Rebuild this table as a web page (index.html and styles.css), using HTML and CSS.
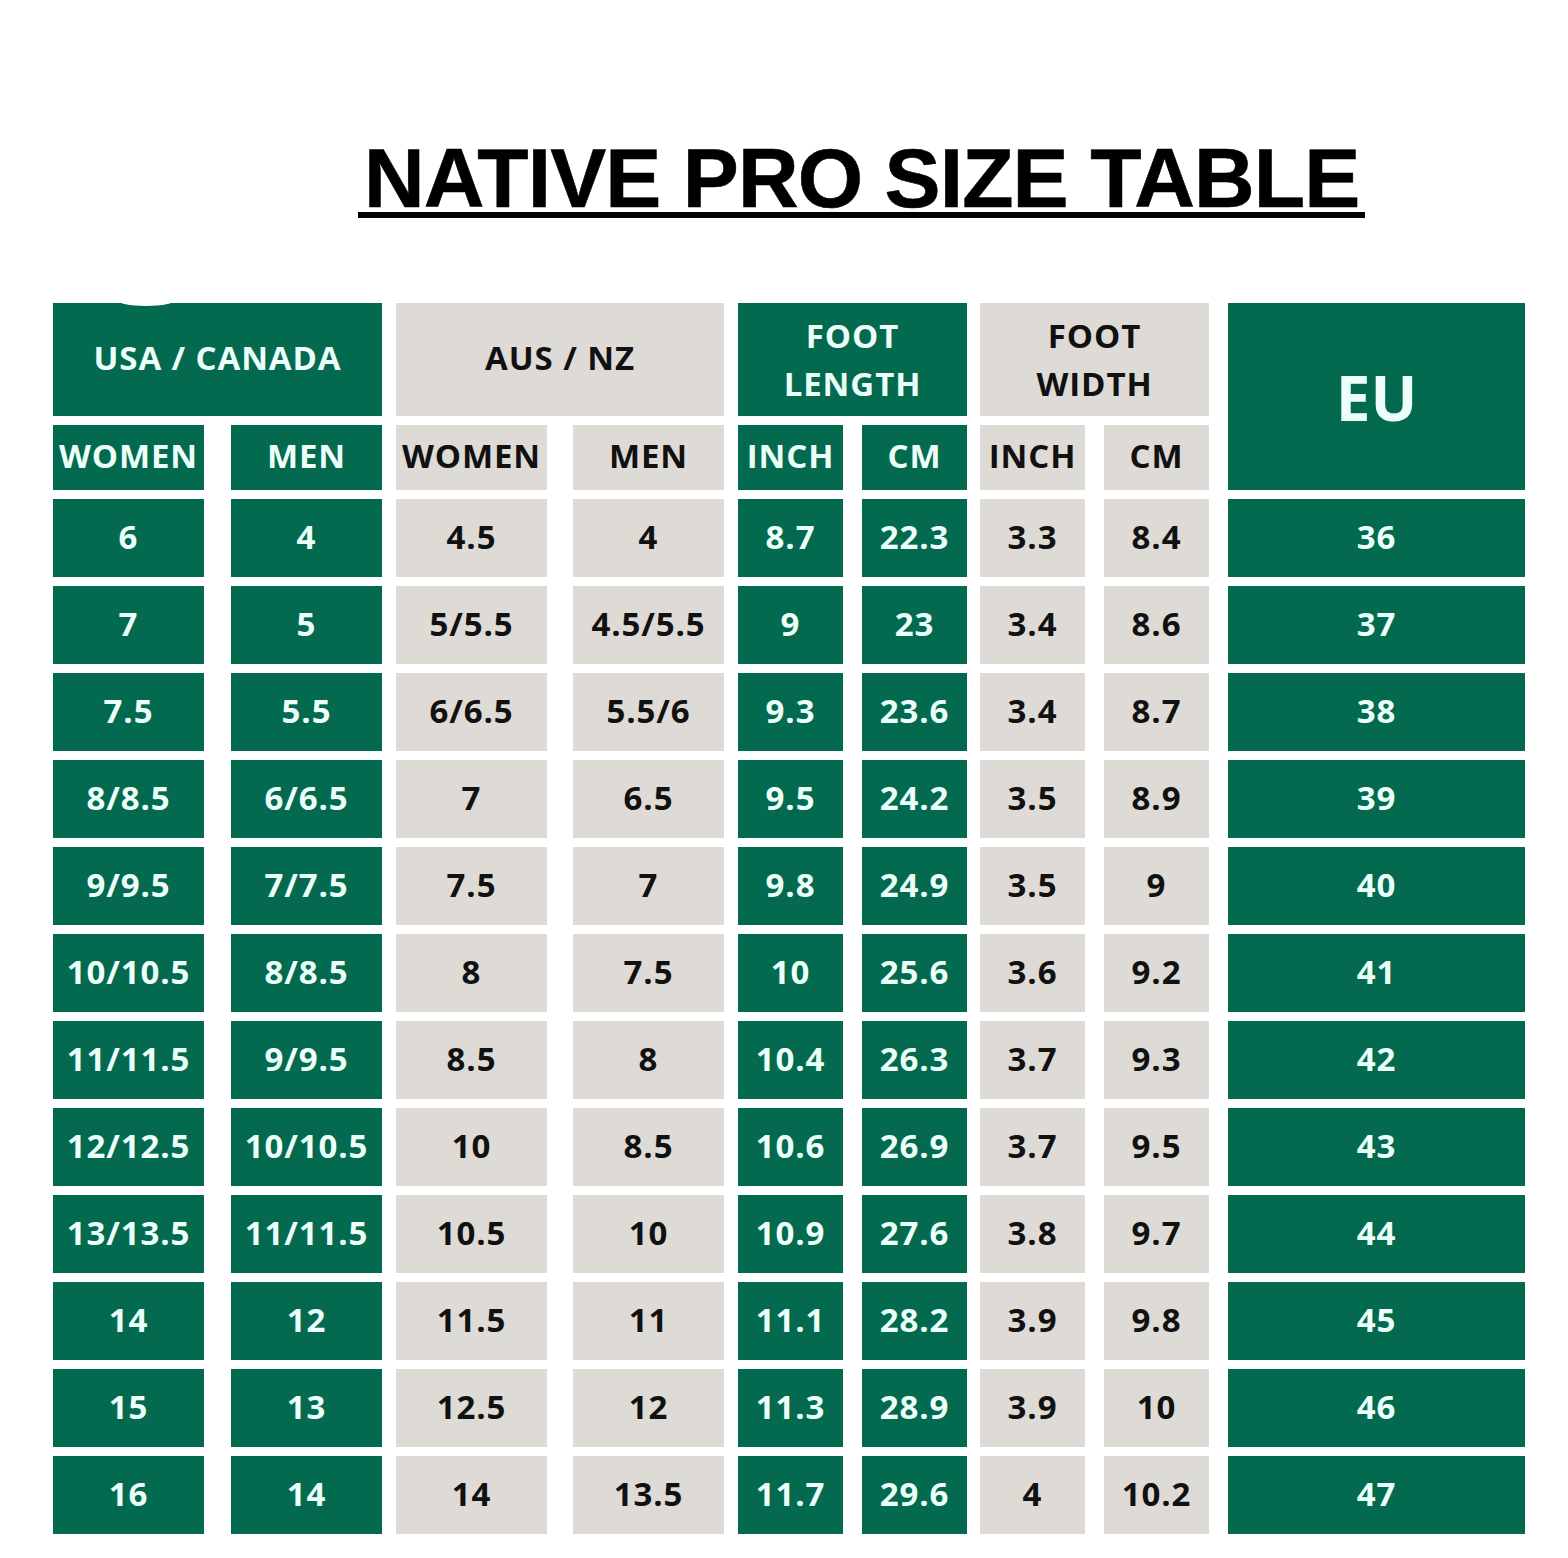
FILE: index.html
```html
<!DOCTYPE html>
<html lang="en">
<head>
<meta charset="utf-8">
<title>Native Pro Size Table</title>
<link rel="stylesheet" href="styles.css">
</head>
<body>
<main class="page">
  <h1 class="title"><span>NATIVE PRO SIZE TABLE</span></h1>
  <div class="chart">
    <section class="group wide usa">
      <div class="cell g head">USA / CANADA</div>
      <div class="cell g">WOMEN</div><div class="cell g">MEN</div>
      <div class="cell g">6</div><div class="cell g">4</div>
      <div class="cell g">7</div><div class="cell g">5</div>
      <div class="cell g">7.5</div><div class="cell g">5.5</div>
      <div class="cell g">8/8.5</div><div class="cell g">6/6.5</div>
      <div class="cell g">9/9.5</div><div class="cell g">7/7.5</div>
      <div class="cell g">10/10.5</div><div class="cell g">8/8.5</div>
      <div class="cell g">11/11.5</div><div class="cell g">9/9.5</div>
      <div class="cell g">12/12.5</div><div class="cell g">10/10.5</div>
      <div class="cell g">13/13.5</div><div class="cell g">11/11.5</div>
      <div class="cell g">14</div><div class="cell g">12</div>
      <div class="cell g">15</div><div class="cell g">13</div>
      <div class="cell g">16</div><div class="cell g">14</div>
    </section>
    <section class="group wide aus">
      <div class="cell n head">AUS / NZ</div>
      <div class="cell n">WOMEN</div><div class="cell n">MEN</div>
      <div class="cell n">4.5</div><div class="cell n">4</div>
      <div class="cell n">5/5.5</div><div class="cell n">4.5/5.5</div>
      <div class="cell n">6/6.5</div><div class="cell n">5.5/6</div>
      <div class="cell n">7</div><div class="cell n">6.5</div>
      <div class="cell n">7.5</div><div class="cell n">7</div>
      <div class="cell n">8</div><div class="cell n">7.5</div>
      <div class="cell n">8.5</div><div class="cell n">8</div>
      <div class="cell n">10</div><div class="cell n">8.5</div>
      <div class="cell n">10.5</div><div class="cell n">10</div>
      <div class="cell n">11.5</div><div class="cell n">11</div>
      <div class="cell n">12.5</div><div class="cell n">12</div>
      <div class="cell n">14</div><div class="cell n">13.5</div>
    </section>
    <section class="group narrow fl">
      <div class="cell g head two">FOOT<br>LENGTH</div>
      <div class="cell g">INCH</div><div class="cell g">CM</div>
      <div class="cell g">8.7</div><div class="cell g">22.3</div>
      <div class="cell g">9</div><div class="cell g">23</div>
      <div class="cell g">9.3</div><div class="cell g">23.6</div>
      <div class="cell g">9.5</div><div class="cell g">24.2</div>
      <div class="cell g">9.8</div><div class="cell g">24.9</div>
      <div class="cell g">10</div><div class="cell g">25.6</div>
      <div class="cell g">10.4</div><div class="cell g">26.3</div>
      <div class="cell g">10.6</div><div class="cell g">26.9</div>
      <div class="cell g">10.9</div><div class="cell g">27.6</div>
      <div class="cell g">11.1</div><div class="cell g">28.2</div>
      <div class="cell g">11.3</div><div class="cell g">28.9</div>
      <div class="cell g">11.7</div><div class="cell g">29.6</div>
    </section>
    <section class="group narrow fw">
      <div class="cell n head two">FOOT<br>WIDTH</div>
      <div class="cell n">INCH</div><div class="cell n">CM</div>
      <div class="cell n">3.3</div><div class="cell n">8.4</div>
      <div class="cell n">3.4</div><div class="cell n">8.6</div>
      <div class="cell n">3.4</div><div class="cell n">8.7</div>
      <div class="cell n">3.5</div><div class="cell n">8.9</div>
      <div class="cell n">3.5</div><div class="cell n">9</div>
      <div class="cell n">3.6</div><div class="cell n">9.2</div>
      <div class="cell n">3.7</div><div class="cell n">9.3</div>
      <div class="cell n">3.7</div><div class="cell n">9.5</div>
      <div class="cell n">3.8</div><div class="cell n">9.7</div>
      <div class="cell n">3.9</div><div class="cell n">9.8</div>
      <div class="cell n">3.9</div><div class="cell n">10</div>
      <div class="cell n">4</div><div class="cell n">10.2</div>
    </section>
    <section class="group eu">
      <div class="cell g eu-head">EU</div>
      <div class="cell g">36</div>
      <div class="cell g">37</div>
      <div class="cell g">38</div>
      <div class="cell g">39</div>
      <div class="cell g">40</div>
      <div class="cell g">41</div>
      <div class="cell g">42</div>
      <div class="cell g">43</div>
      <div class="cell g">44</div>
      <div class="cell g">45</div>
      <div class="cell g">46</div>
      <div class="cell g">47</div>
    </section>
  </div>
</main>
</body>
</html>
```
FILE: styles.css
```css
* { box-sizing: border-box; }

html, body {
  margin: 0;
  padding: 0;
  background: #ffffff;
}

.page {
  width: 1568px;
  padding-top: 144px;
}

.title {
  margin: 0 0 85px 0;
  padding-left: 358px;
  font-family: "Liberation Sans", Arial, sans-serif;
  font-weight: 700;
  font-size: 84px;
  line-height: 68px;
  letter-spacing: -0.9px;
  color: #000;
  -webkit-text-stroke: 0.6px #000;
}

.title span {
  display: inline-block;
  padding: 0 6px 0 6px;
  border-bottom: 6px solid #000;
}

.chart {
  display: flex;
  padding-left: 53px;
  font-family: "Open Sans", "Liberation Sans", sans-serif;
  font-weight: 700;
  font-size: 33px;
  letter-spacing: 0.9px;
}

.group {
  display: grid;
  grid-template-rows: 113px 65px repeat(12, 78px);
  row-gap: 9px;
}

.wide { grid-template-columns: 151px 151px; }
.narrow { grid-template-columns: 105px 105px; column-gap: 19px; }

.usa { column-gap: 27px; position: relative; }
.aus { column-gap: 26px; margin-left: 14px; }
.fl { margin-left: 14px; }
.fw { margin-left: 13px; }
.eu {
  margin-left: 19px;
  grid-template-columns: 297px;
  grid-template-rows: 187px repeat(12, 78px);
}

.cell {
  display: flex;
  align-items: center;
  justify-content: center;
  text-align: center;
  white-space: nowrap;
  padding-bottom: 4px;
}

.g { background: #036a4f; color: #ecfff8; }
.n { background: #dedbd6; color: #111111; }

.head { grid-column: 1 / span 2; }
.head.two { line-height: 48px; padding-bottom: 0; }

.eu-head {
  font-size: 62px;
  letter-spacing: 0;
  padding-bottom: 0;
}

.usa::before {
  content: "";
  position: absolute;
  left: 64px;
  top: -9px;
  width: 58px;
  height: 12px;
  border-radius: 50%;
  background: #ffffff;
}
```
